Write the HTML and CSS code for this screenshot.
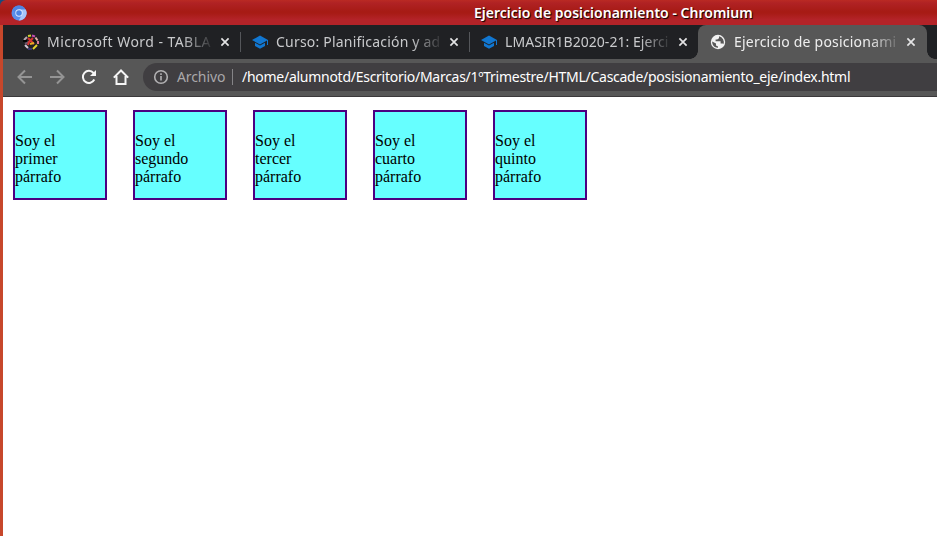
FILE: index.html
```
<!DOCTYPE html>
<html lang="es">
<head>
<meta charset="utf-8">
<title>Ejercicio de posicionamiento</title>
<link rel="stylesheet" href="styles.css">
</head>
<body>
<div class="window">
  <header class="titlebar">
    <svg class="app-icon" viewBox="0 0 16 16"><circle cx="8" cy="8" r="7.5" fill="#5b8eea"/><path d="M1.5 4.2A7.5 7.5 0 0 1 14.5 4.5H8L4.8 9.5Z" fill="#4f84e2"/><path d="M8 4.5h6.8A7.5 7.5 0 0 1 7.7 15.5L11 9.8Z" fill="#a5c5fa"/><circle cx="8" cy="8" r="3.7" fill="#dce9ff"/><circle cx="8" cy="8" r="2.8" fill="#4b84e4"/></svg>
    <span class="window-title">Ejercicio de posicionamiento - Chromium</span>
  </header>
  <div class="browser">
    <nav class="tabs">
      <div class="tab">
        <svg class="favicon" viewBox="0 0 16 16" fill="none" stroke-width="2"><path d="M1 6l3-3" stroke="#b4a8b1"/><path d="M5 2l3-.5" stroke="#cfd530"/><path d="M9 1.5l3 1" stroke="#c14cb0"/><path d="M12.5 3.5l2 3" stroke="#e4b2a7"/><path d="M15 7v3" stroke="#da7b9c"/><path d="M14 11l-4 4" stroke="#e5d42b"/><path d="M9 15H5" stroke="#393570"/><path d="M5 14l-3-3" stroke="#d4c8d8"/><path d="M0 7h4" stroke="#050505"/><path d="M2 10l4-2" stroke="#70566d"/><path d="M5 4l6 6M10 4L6 8l-1 3" stroke="#d83432"/><path d="M7 10l4-1" stroke="#e6ad23"/><path d="M11 6l2 2" stroke="#111"/></svg>
        <span class="tab-title t1">Microsoft Word - TABLA</span>
        <svg class="close" viewBox="0 0 10 10"><path d="M1.4 1.4l7.2 7.2M8.6 1.4L1.4 8.6"/></svg>
      </div>
      <div class="tab divided">
        <svg class="favicon" viewBox="0 0 16 16" fill="#1177d1"><path d="M8 1.5L0 6l8 4.5 7-4V11h1V6Z"/><path d="M3 8.7V12l5 2.8 5-2.8V8.7L8 11.6Z"/></svg>
        <span class="tab-title t2">Curso: Planificación y ad</span>
        <svg class="close" viewBox="0 0 10 10"><path d="M1.4 1.4l7.2 7.2M8.6 1.4L1.4 8.6"/></svg>
      </div>
      <div class="tab divided">
        <svg class="favicon" viewBox="0 0 16 16" fill="#1177d1"><path d="M8 1.5L0 6l8 4.5 7-4V11h1V6Z"/><path d="M3 8.7V12l5 2.8 5-2.8V8.7L8 11.6Z"/></svg>
        <span class="tab-title t3">LMASIR1B2020-21: Ejerci</span>
        <svg class="close" viewBox="0 0 10 10"><path d="M1.4 1.4l7.2 7.2M8.6 1.4L1.4 8.6"/></svg>
      </div>
      <div class="tab active">
        <svg class="favicon" viewBox="0 0 16 16"><circle cx="8" cy="8" r="7.2" fill="#f1f1f1"/><path d="M2.2 7.5L6 9.4v2l2 1v1.3C4.5 13.8 2 11 2.2 7.5ZM9 2.3v1.9L7.2 5.4H5.6v1.8h5v2.3h2.1l.7.8A6 6 0 0 0 9 2.3Z" fill="#575757"/></svg>
        <span class="tab-title t4">Ejercicio de posicionami</span>
        <svg class="close" viewBox="0 0 10 10"><path d="M1.4 1.4l7.2 7.2M8.6 1.4L1.4 8.6"/></svg>
      </div>
    </nav>
    <div class="toolbar">
      <svg class="nav-icon dim" viewBox="0 0 16 16"><path d="M15 8H2M8 1.5L1.5 8 8 14.5"/></svg>
      <svg class="nav-icon dim" viewBox="0 0 16 16"><path d="M1 8h13M8 1.5L14.5 8 8 14.5"/></svg>
      <svg class="nav-icon" viewBox="0 0 16 16"><path d="M13.3 10.5A6 6 0 1 1 12.5 4L14 5.5"/><path class="solid" d="M15 1v6H9Z"/></svg>
      <svg class="nav-icon" viewBox="0 0 16 16"><path d="M.8 8.6L8 1.5l7.2 7.1M3.5 7v8h9V7"/></svg>
      <div class="address">
        <svg class="info" viewBox="0 0 16 16"><circle cx="8" cy="8" r="6.3"/><path d="M8 7v4.5M8 4.3v1.7"/></svg>
        <span class="scheme">Archivo</span>
        <span class="url">/home/alumnotd/Escritorio/Marcas/1ºTrimestre/HTML/Cascade/posisionamiento_eje/index.html</span>
      </div>
    </div>
    <main class="page">
      <p class="box">Soy el primer párrafo</p>
      <p class="box">Soy el segundo párrafo</p>
      <p class="box">Soy el tercer párrafo</p>
      <p class="box">Soy el cuarto párrafo</p>
      <p class="box">Soy el quinto párrafo</p>
    </main>
  </div>
</div>
</body>
</html>
```
FILE: styles.css
```
* { box-sizing: border-box; }
body { margin: 0; background: #174a7c; overflow: hidden; }
svg { display: block; flex: none; }
.window { height: 536px; display: flex; flex-direction: column; font-family: "Noto Sans", sans-serif; }
.titlebar {
  height: 25px; flex: none; display: grid; grid-template-columns: 474px 1fr; align-items: center;
  background: linear-gradient(#ba2a23, #b02224 12%, #a71b15 45%, #a71b15 52%, #b32328 78%, #b32328);
  border-top-left-radius: 6px;
}
.app-icon { width: 16px; height: 16px; margin-left: 11px; }
.window-title { color: #fff; font-size: 14px; font-weight: 600; white-space: nowrap; text-shadow: 1px 1px 1px #000; letter-spacing: 0.01px; line-height: 24px; }
.browser { flex: 1; display: flex; flex-direction: column; border-left: 3px solid #c7472b; }
.tabs { height: 34px; display: flex; background: #202124; padding-left: 8px; }
.tab { position: relative; width: 229px; flex: none; display: flex; align-items: center; padding-left: 12px; color: #c9cacc; }
.divided::before { content: ""; position: absolute; left: 0; top: 7px; width: 1px; height: 20px; background: #54565a; }
.favicon { width: 16px; height: 16px; margin-right: 8px; }
.tab-title {
  width: 164px; flex: none; white-space: nowrap; font-size: 14px; line-height: 24px;
  -webkit-mask-image: linear-gradient(90deg, #000 135px, transparent 168px); mask-image: linear-gradient(90deg, #000 135px, transparent 168px);
}
.t1 { letter-spacing: 0.45px; }
.t2 { letter-spacing: 0.2px; }
.t3 { letter-spacing: 0.05px; }
.t4 { letter-spacing: 0.22px; }
.close { width: 10px; height: 10px; margin-left: 9px; fill: none; stroke: #e4e4e5; stroke-width: 1.7; }
.active { background: #575757; border-radius: 8px 8px 0 0; color: #eee; }
.active .close { margin-left: 8px; }
.active::before, .active::after { content: ""; position: absolute; bottom: 0; width: 8px; height: 8px; }
.active::before { left: -8px; background: radial-gradient(circle at 0 0, transparent 7.5px, #575757 8px); }
.active::after { right: -8px; background: radial-gradient(circle at 100% 0, transparent 7.5px, #575757 8px); }
.toolbar { height: 38px; display: flex; align-items: center; gap: 16px; padding: 0 0 2px 14px; background: #575757; border-bottom: 1px solid #3b393b; }
.nav-icon { width: 16px; height: 16px; fill: none; stroke: #f5f5f5; stroke-width: 2; }
.nav-icon .solid { fill: #f5f5f5; stroke: none; }
.dim { stroke: #949494; }
.address { flex: 1; min-width: 0; height: 28px; margin-left: -2px; display: flex; align-items: center; padding-left: 10px; border-radius: 14px 0 0 14px; background: #403e41; font-size: 14px; white-space: nowrap; }
.info { width: 16px; height: 16px; fill: none; stroke: #b2b1b3; stroke-width: 1.6; }
.scheme { width: 56px; height: 16px; line-height: 16px; margin-left: 8px; border-right: 1px solid #858487; color: #a9a8aa; flex: none; letter-spacing: -0.1px; }
.url { color: #fff; line-height: 24px; margin-left: 9px; letter-spacing: -0.27px; }
.page { flex: 1; background: #fff; display: flex; align-items: flex-start; gap: 26px; padding: 13px 0 0 10px; font: 16px/18px "Liberation Serif", serif; }
.box { width: 94px; height: 90px; margin: 0; padding: 20px 30px 0 0; border: 2px solid #4b0082; background: #66ffff; color: #000; }
```
